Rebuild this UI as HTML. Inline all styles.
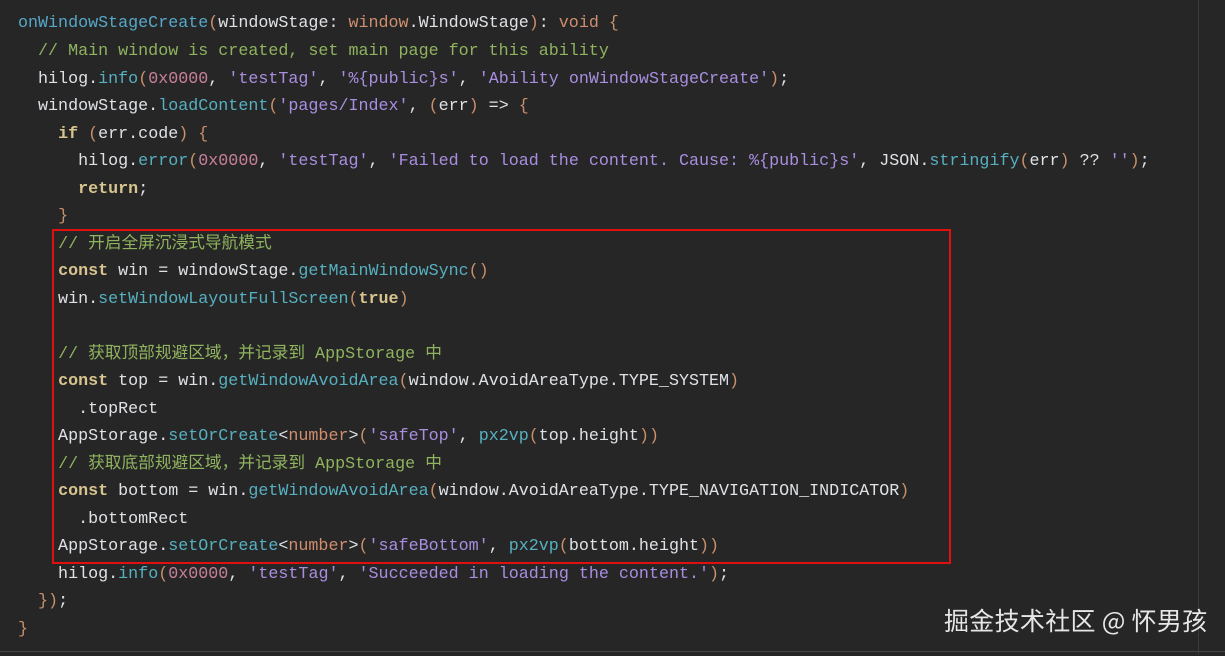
<!DOCTYPE html>
<html><head><meta charset="utf-8"><style>
html,body{margin:0;padding:0}
body{width:1225px;height:654px;background:#262626;position:relative;overflow:hidden;font-family:"Liberation Mono","Noto Sans CJK SC",monospace;font-size:16.7px;color:#dfe1e5}
.l{position:absolute;left:18px;white-space:pre;line-height:20px}
.f{color:#56a8c8}.m{color:#56b0c0}.c{color:#8fb35e}.s{color:#a98ee0}.n{color:#c8809a}.t{color:#cf8e6d}.k{color:#d8c48e;font-weight:bold}.p{color:#c9906a}
.box{position:absolute;left:52px;top:229px;width:895px;height:331px;border:2px solid #e01010}
.wm{position:absolute;left:944px;top:603px;font-family:"Noto Sans CJK SC",sans-serif;font-size:25px;line-height:34px;color:#e6e6e6;letter-spacing:0.3px}
.vl{position:absolute;left:1198px;top:0;width:1px;height:654px;background:#3a3a3a}
.hl{position:absolute;left:0;top:651px;width:1225px;height:1px;background:#444}
</style></head><body>
<div class="vl"></div><div class="hl"></div>
<div style="position:absolute;left:0;top:2px;width:100%;height:100%">
<div class="l" style="top:12px"><span class="f">onWindowStageCreate</span><span class="p">(</span>windowStage: <span class="t">window</span>.WindowStage<span class="p">)</span>: <span class="t">void</span> <span class="p">{</span></div>
<div class="l" style="top:40px">  <span class="c">// Main window is created, set main page for this ability</span></div>
<div class="l" style="top:68px">  hilog.<span class="m">info</span><span class="p">(</span><span class="n">0x0000</span>, <span class="s">'testTag'</span>, <span class="s">'%{public}s'</span>, <span class="s">'Ability onWindowStageCreate'</span><span class="p">)</span>;</div>
<div class="l" style="top:95px">  windowStage.<span class="m">loadContent</span><span class="p">(</span><span class="s">'pages/Index'</span>, <span class="p">(</span>err<span class="p">)</span> =&gt; <span class="p">{</span></div>
<div class="l" style="top:123px">    <span class="k">if</span> <span class="p">(</span>err.code<span class="p">)</span> <span class="p">{</span></div>
<div class="l" style="top:150px">      hilog.<span class="m">error</span><span class="p">(</span><span class="n">0x0000</span>, <span class="s">'testTag'</span>, <span class="s">'Failed to load the content. Cause: %{public}s'</span>, JSON.<span class="m">stringify</span><span class="p">(</span>err<span class="p">)</span> ?? <span class="s">''</span><span class="p">)</span>;</div>
<div class="l" style="top:178px">      <span class="k">return</span>;</div>
<div class="l" style="top:205px">    <span class="p">}</span></div>
<div class="l" style="top:233px">    <span class="c">// 开启全屏沉浸式导航模式</span></div>
<div class="l" style="top:260px">    <span class="k">const</span> win = windowStage.<span class="m">getMainWindowSync</span><span class="p">()</span></div>
<div class="l" style="top:288px">    win.<span class="m">setWindowLayoutFullScreen</span><span class="p">(</span><span class="k">true</span><span class="p">)</span></div>
<div class="l" style="top:343px">    <span class="c">// 获取顶部规避区域，并记录到 AppStorage 中</span></div>
<div class="l" style="top:370px">    <span class="k">const</span> top = win.<span class="m">getWindowAvoidArea</span><span class="p">(</span>window.AvoidAreaType.TYPE_SYSTEM<span class="p">)</span></div>
<div class="l" style="top:398px">      .topRect</div>
<div class="l" style="top:425px">    AppStorage.<span class="m">setOrCreate</span>&lt;<span class="t">number</span>&gt;<span class="p">(</span><span class="s">'safeTop'</span>, <span class="m">px2vp</span><span class="p">(</span>top.height<span class="p">))</span></div>
<div class="l" style="top:453px">    <span class="c">// 获取底部规避区域，并记录到 AppStorage 中</span></div>
<div class="l" style="top:480px">    <span class="k">const</span> bottom = win.<span class="m">getWindowAvoidArea</span><span class="p">(</span>window.AvoidAreaType.TYPE_NAVIGATION_INDICATOR<span class="p">)</span></div>
<div class="l" style="top:508px">      .bottomRect</div>
<div class="l" style="top:535px">    AppStorage.<span class="m">setOrCreate</span>&lt;<span class="t">number</span>&gt;<span class="p">(</span><span class="s">'safeBottom'</span>, <span class="m">px2vp</span><span class="p">(</span>bottom.height<span class="p">))</span></div>
<div class="l" style="top:563px">    hilog.<span class="m">info</span><span class="p">(</span><span class="n">0x0000</span>, <span class="s">'testTag'</span>, <span class="s">'Succeeded in loading the content.'</span><span class="p">)</span>;</div>
<div class="l" style="top:590px">  <span class="p">})</span>;</div>
<div class="l" style="top:618px"><span class="p">}</span></div>
</div>
<div class="box"></div>
<div class="wm">掘金技术社区 @ 怀男孩</div>
</body></html>
